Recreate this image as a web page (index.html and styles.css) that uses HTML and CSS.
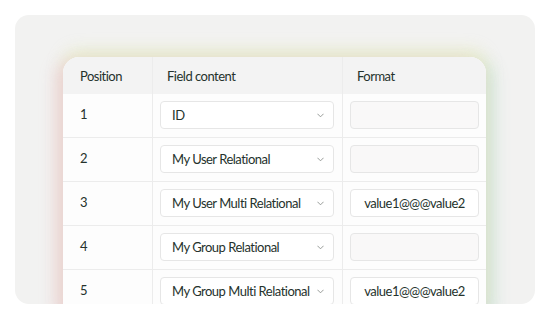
FILE: index.html
```html
<!DOCTYPE html>
<html>
<head>
<meta charset="utf-8">
<link rel="stylesheet" href="styles.css">
</head>
<body>
<div class="card">
  <div class="table">
    <div class="row head">
      <div class="cell c1">Position</div>
      <div class="cell c2">Field content</div>
      <div class="cell c3">Format</div>
    </div>
    <div class="row">
      <div class="cell c1 num">1</div>
      <div class="cell c2"><div class="select"><span>ID</span><svg class="chev" viewBox="0 0 8 5"><path d="M0.5 0.5 L4 4 L7.5 0.5"/></svg></div></div>
      <div class="cell c3"><div class="input empty"></div></div>
    </div>
    <div class="row">
      <div class="cell c1 num">2</div>
      <div class="cell c2"><div class="select"><span>My User Relational</span><svg class="chev" viewBox="0 0 8 5"><path d="M0.5 0.5 L4 4 L7.5 0.5"/></svg></div></div>
      <div class="cell c3"><div class="input empty"></div></div>
    </div>
    <div class="row">
      <div class="cell c1 num">3</div>
      <div class="cell c2"><div class="select"><span>My User Multi Relational</span><svg class="chev" viewBox="0 0 8 5"><path d="M0.5 0.5 L4 4 L7.5 0.5"/></svg></div></div>
      <div class="cell c3"><div class="input">value1@@@value2</div></div>
    </div>
    <div class="row">
      <div class="cell c1 num">4</div>
      <div class="cell c2"><div class="select"><span>My Group Relational</span><svg class="chev" viewBox="0 0 8 5"><path d="M0.5 0.5 L4 4 L7.5 0.5"/></svg></div></div>
      <div class="cell c3"><div class="input empty"></div></div>
    </div>
    <div class="row">
      <div class="cell c1 num">5</div>
      <div class="cell c2"><div class="select"><span>My Group Multi Relational</span><svg class="chev" viewBox="0 0 8 5"><path d="M0.5 0.5 L4 4 L7.5 0.5"/></svg></div></div>
      <div class="cell c3"><div class="input">value1@@@value2</div></div>
    </div>
  </div>
</div>
</body>
</html>
```

FILE: styles.css
```css
* { box-sizing: border-box; }
html, body { margin: 0; background: #ffffff; }
body {
  padding: 15px;
  font-family: Lato, "Noto Sans", sans-serif;
  font-size: 13px;
  letter-spacing: -0.5px;
  color: #25322c;
}
.card {
  width: 520px;
  height: 289px;
  background: #f2f2f1;
  border-radius: 14px;
  overflow: hidden;
  padding: 42px 49px 0 48px;
}
.table {
  width: 423px;
  background: #fdfdfd;
  border-radius: 16px 16px 0 0;
  overflow: hidden;
  box-shadow:
    -7px 4px 16px rgba(236, 200, 205, 0.75),
    0 -7px 16px rgba(232, 238, 192, 0.7),
    7px 4px 16px rgba(196, 224, 212, 0.85);
}
.row {
  display: flex;
  height: 44px;
  border-bottom: 1px solid #ececec;
}
.row.head {
  height: 37px;
  background: #f3f3f3;
  border-bottom: none;
  align-items: center;
}
.cell { height: 100%; }
.c1 { width: 90px; border-right: 1px solid #ececec; padding-left: 17px; }
.c2 { width: 190px; border-right: 1px solid #ececec; padding: 7px 0 0 7px; }
.c3 { width: 143px; padding: 7px 0 0 7px; }
.head .cell { display: flex; align-items: center; padding-top: 0; }
.head .c2, .head .c3 { padding-left: 14px; }
.num { line-height: 28px; padding-top: 6px; }
.select {
  width: 174px;
  height: 28px;
  border: 1px solid #e6e6e6;
  border-radius: 4px;
  background: #ffffff;
  display: flex;
  align-items: center;
  justify-content: space-between;
  padding: 0 9px 0 11px;
  white-space: nowrap;
}
.chev { width: 7px; height: 5px; flex: none; }
.chev path { fill: none; stroke: #8a8f8c; stroke-width: 1; }
.input {
  width: 129px;
  height: 28px;
  border: 1px solid #e6e6e6;
  border-radius: 4px;
  background: #ffffff;
  display: flex;
  align-items: center;
  justify-content: center;
  white-space: nowrap;
}
.input.empty { background: #f9f8f8; }
```
